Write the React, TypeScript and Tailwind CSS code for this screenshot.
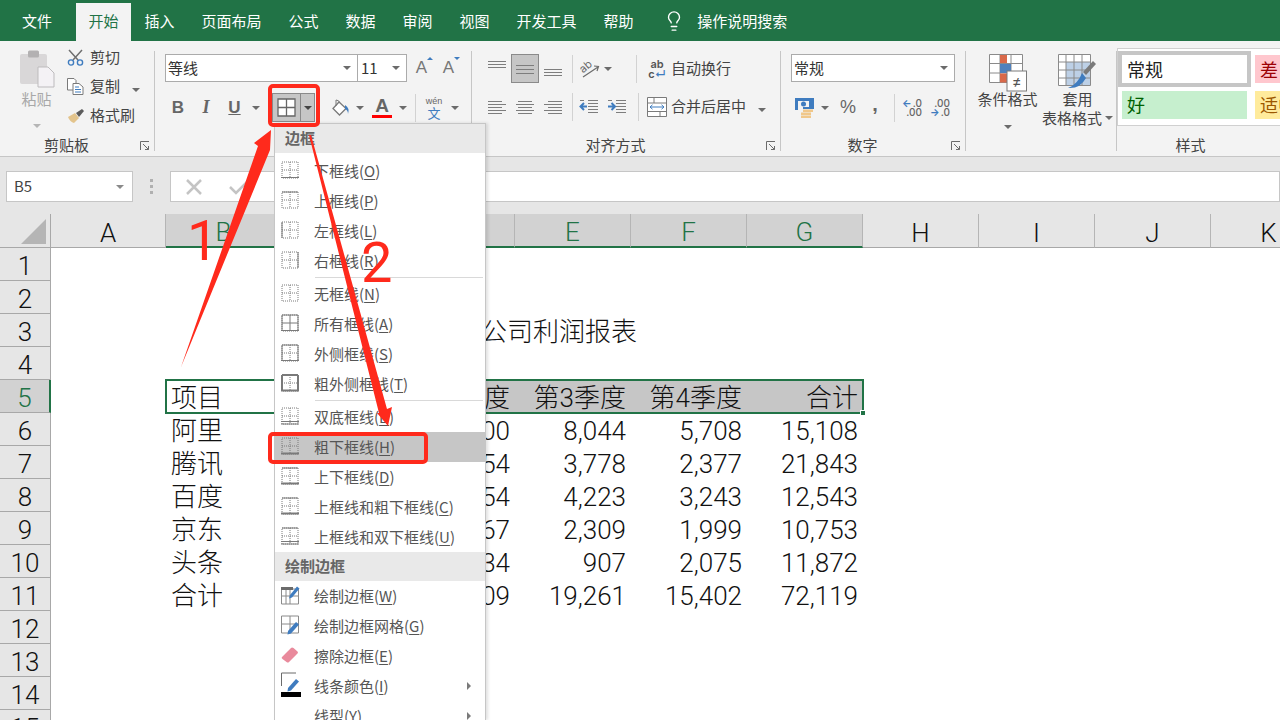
import { Lightbulb } from "lucide-react";
import type { ReactNode } from "react";

const tabs = ["开始", "插入", "页面布局", "公式", "数据", "审阅", "视图", "开发工具", "帮助"];
const columns = ["A", "B", "C", "D", "E", "F", "G", "H", "I", "J", "K"];
const rowNumbers = [1, 2, 3, 4, 5, 6, 7, 8, 9, 10, 11, 12, 13, 14, 15];
const selectedColumns = ["B", "C", "D", "E", "F", "G"];

// only what shows beside the open menu: column D is covered up to x=486
const tableRows: Record<number, string[]> = {
  5: ["项目", "度", "第3季度", "第4季度", "合计"],
  6: ["阿里", "00", "8,044", "5,708", "15,108"],
  7: ["腾讯", "54", "3,778", "2,377", "21,843"],
  8: ["百度", "54", "4,223", "3,243", "12,543"],
  9: ["京东", "67", "2,309", "1,999", "10,753"],
  10: ["头条", "34", "907", "2,075", "11,872"],
  11: ["合计", "09", "19,261", "15,402", "72,119"],
};

type Sides = { t?: number; b?: number; l?: number; r?: number; i?: boolean; dbl?: boolean };

const borderItems: { label: string; key: string; sides: Sides; sep?: boolean; active?: boolean }[] = [
  { label: "下框线", key: "O", sides: { b: 1 } },
  { label: "上框线", key: "P", sides: { t: 1 } },
  { label: "左框线", key: "L", sides: { l: 1 } },
  { label: "右框线", key: "R", sides: { r: 1 }, sep: true },
  { label: "无框线", key: "N", sides: {} },
  { label: "所有框线", key: "A", sides: { t: 1, b: 1, l: 1, r: 1, i: true } },
  { label: "外侧框线", key: "S", sides: { t: 1, b: 1, l: 1, r: 1 } },
  { label: "粗外侧框线", key: "T", sides: { t: 2, b: 2, l: 2, r: 2 }, sep: true },
  { label: "双底框线", key: "B", sides: { dbl: true } },
  { label: "粗下框线", key: "H", sides: { b: 2 }, active: true },
  { label: "上下框线", key: "D", sides: { t: 1, b: 2 } },
  { label: "上框线和粗下框线", key: "C", sides: { t: 1, b: 2 } },
  { label: "上框线和双下框线", key: "U", sides: { t: 1, dbl: true } },
];

function BorderIcon({ sides }: { sides: Sides }) {
  const dots = "1 1";
  const c = "#7a7a7a";
  return (
    <svg width="18" height="18" viewBox="0 0 18 18" className="shrink-0">
      <path d="M1 1H17V17H1Z" fill="none" stroke={c} strokeDasharray={dots} />
      <path d="M9 1V17M1 9H17" fill="none" stroke={c} strokeDasharray={sides.i ? undefined : dots} />
      {sides.t && <line x1="1" x2="17" y1="1" y2="1" stroke={c} strokeWidth={sides.t} />}
      {sides.b && <line x1="0" x2="18" y1="16.5" y2="16.5" stroke={c} strokeWidth={sides.b} />}
      {sides.l && <line x1="1" x2="1" y1="1" y2="17" stroke={c} strokeWidth={sides.l} />}
      {sides.r && <line x1="17" x2="17" y1="1" y2="17" stroke={c} strokeWidth={sides.r} />}
      {sides.dbl && <path d="M0 14.500H18M0 17H18" stroke={c} />}
    </svg>
  );
}

function Caret({ color = "#6b6b6b" }: { color?: string }) {
  return <span className="inline-block h-0 w-0 border-x-[4px] border-t-[4px] border-x-transparent" style={{ borderTopColor: color }} />;
}

function Launcher() {
  return (
    <svg width="10" height="10" viewBox="0 0 10 10" className="absolute bottom-[5px] right-[5px]">
      <path d="M.5 9V.5H9M3 3L8.500 8.500M8.500 5V8.500H5" fill="none" stroke="#6b6b6b" />
    </svg>
  );
}

function Group({ width, label, launcher, children }: { width: string; label: string; launcher?: boolean; children: ReactNode }) {
  return (
    <div className={`relative flex h-full shrink-0 flex-col ${width}`}>
      <div className="min-h-0 flex-1">{children}</div>
      <div className="flex h-[24px] items-center justify-center pr-[22px] text-[15px] leading-none text-[#444]">{label}</div>
      {launcher && <Launcher />}
      <div className="absolute bottom-[5px] right-0 top-[5px] w-px bg-[#c6c6c6]" />
    </div>
  );
}

function Slot({ w, children }: { w: string; children?: ReactNode }) {
  return <div className={`flex h-full shrink-0 items-center justify-center ${w}`}>{children}</div>;
}

function VSep() {
  return <div className="h-[28px] w-px shrink-0 bg-[#d2d2d2]" />;
}

function Lines({ y, w }: { y: number[]; w: [number, number][] }) {
  return (
    <svg width="18" height="18" viewBox="0 0 18 18">
      {y.map((yy, i) => (
        <line key={i} x1={w[i][0]} x2={w[i][1]} y1={yy + 0.5} y2={yy + 0.5} stroke="#7d7d7d" />
      ))}
    </svg>
  );
}

function IndentIcon({ right }: { right?: boolean }) {
  return (
    <svg width="20" height="18" viewBox="0 0 20 18">
      <path d="M9 2.500H19M9 5.500H19M9 8.500H19M9 11.500H19M9 14.500H19M1 2.500H5" stroke="#7d7d7d" fill="none" />
      <path d={right ? "M1 8.500H7M4.500 5L8 8.500L4.500 12" : "M8 8.500H2M5 5L1.500 8.500L5 12"} stroke="#3f7cbf" strokeWidth="2" fill="none" />
    </svg>
  );
}

function PasteIcon() {
  return (
    <svg width="36" height="38" viewBox="0 0 36 38">
      <rect x="1" y="4" width="27" height="30" rx="2" fill="#d9d7d8" />
      <rect x="9" y="0.5" width="11" height="7" rx="1.5" fill="#b3b1b2" />
      <path d="M19 17H29L35 23V37H19Z" fill="#f4f2f5" stroke="#bdbbbd" />
    </svg>
  );
}

function ScissorsIcon() {
  return (
    <svg width="17" height="17" viewBox="0 0 17 17">
      <path d="M2 1L11 11M15 1L6 11" stroke="#6f6f6f" strokeWidth="1.500" fill="none" />
      <circle cx="4" cy="13.500" r="2.600" stroke="#3f7cbf" strokeWidth="1.400" fill="none" />
      <circle cx="13" cy="13.500" r="2.600" stroke="#3f7cbf" strokeWidth="1.400" fill="none" />
    </svg>
  );
}

function CopyIcon() {
  return (
    <svg width="17" height="17" viewBox="0 0 17 17">
      <path d="M.5 .5H7L9 2.500V12H.5Z" fill="#fff" stroke="#7a7a7a" />
      <path d="M6 5.500H12L16 9V16.500H6Z" fill="#fff" stroke="#7a7a7a" />
      <path d="M8 9H12M8 11.500H14M8 14H14" stroke="#3f7cbf" />
    </svg>
  );
}

function BrushIcon() {
  return (
    <svg width="18" height="16" viewBox="0 0 18 16">
      <path d="M1 9L8 5L12 10L7 15Q3 14 1 9Z" fill="#e3c48c" />
      <path d="M9 5L15 1L17 3L12 9Z" fill="#5c5c5c" />
    </svg>
  );
}

function FillIcon() {
  return (
    <svg width="20" height="18" viewBox="0 0 20 18">
      <path d="M9 3L16 9.500L9.500 16L3 9.500Z" fill="#fff" stroke="#7a7a7a" strokeWidth="1.300" />
      <path d="M6 1L6 7M6 1Q9 1 10 4" stroke="#7a7a7a" fill="none" />
      <path d="M15 6Q20 9 18 15Q18 11 15 10Z" fill="#3f7cbf" />
    </svg>
  );
}

function OrientIcon() {
  return (
    <svg width="20" height="18" viewBox="0 0 20 18">
      <path d="M3 17L18 7M14 6L18.500 6.500L17 11" stroke="#6b6b6b" fill="none" strokeWidth="1.200" />
      <text x="0" y="11" fontSize="11" fill="#6b6b6b" fontFamily="Inter" transform="rotate(-40 5 8)">ab</text>
    </svg>
  );
}

function MergeIcon() {
  return (
    <svg width="20" height="20" viewBox="0 0 20 20">
      <path d="M.5 .5H19.500V19.500H.5ZM.5 6H19.500M.5 14.500H19.500M7 .5V6M13 14.500V19.500" fill="#fff" stroke="#7a7a7a" />
      <path d="M3 10H17M5.500 7.800L3 10L5.500 12.200M14.500 7.800L17 10L14.500 12.200" fill="none" stroke="#3f7cbf" />
    </svg>
  );
}

function CurrencyIcon() {
  return (
    <svg width="20" height="20" viewBox="0 0 20 20">
      <path d="M0 0H19V11H8V9H14V3H3V12H0Z" fill="#3f7cbf" />
      <ellipse cx="8.500" cy="6" rx="2.500" ry="2.500" fill="#3f7cbf" />
      <rect x="8" y="11.500" width="10" height="2.500" fill="#f0c78a" />
      <rect x="6" y="14.500" width="10" height="2.500" fill="#f0c78a" />
      <rect x="6" y="17.500" width="10" height="2.500" fill="#f0c78a" />
    </svg>
  );
}

function CondFormatIcon() {
  return (
    <svg width="38" height="38" viewBox="0 0 38 38">
      <path d="M.5 .5H33.500V28.500H.5ZM.5 9.500H33.500M.5 19H33.500M11 .5V28.500M22 .5V28.500" fill="#fff" stroke="#8a8a8a" />
      <rect x="11" y="1" width="7" height="8" fill="#d9694a" />
      <rect x="11" y="10" width="11" height="9" fill="#4f81bd" />
      <rect x="11" y="19.500" width="8" height="9" fill="#d9694a" />
      <rect x="18" y="17" width="19.500" height="20" fill="#fff" stroke="#7a7a7a" />
      <text x="27.700" y="33" textAnchor="middle" fontSize="15" fill="#555" fontFamily="Inter">≠</text>
    </svg>
  );
}

function TableFormatIcon() {
  return (
    <svg width="40" height="38" viewBox="0 0 40 38">
      <path d="M.5 .5H32.500V31.500H.5Z" fill="#fff" stroke="#8a8a8a" />
      <rect x="8" y="8" width="24" height="23" fill="#bdd0e6" />
      <path d="M.5 8H32.500M.5 16H32.500M.5 24H32.500M8 .5V31.500M16 .5V31.500M24 .5V31.500" stroke="#8a8a8a" fill="none" />
      <path d="M25 18L35 7L38 10L28 21Z" fill="#7a7a7a" />
      <path d="M24 19L28 24Q22 35 10 34Q20 30 24 19Z" fill="#3f7cbf" />
    </svg>
  );
}

function PencilGridIcon({ variant }: { variant: "frame" | "grid" | "color" }) {
  return (
    <svg width="20" height="20" viewBox="0 0 20 20" className="shrink-0">
      {variant === "frame" && (
        <>
          <path d="M.5 4H17.500V19H.5ZM.5 11H17.500M9 4V19M5 4V19" fill="none" stroke="#8a8a8a" />
          <rect x="0" y="2" width="12" height="3" fill="#6b6b6b" />
        </>
      )}
      {variant === "grid" && <path d="M.5 1H17.500V18H.5ZM.5 9H17.500M9 1V18" fill="none" stroke="#8a8a8a" />}
      {variant === "color" && <path d="M.5 14V1H15" fill="none" stroke="#6b6b6b" />}
      <path d={variant === "frame" ? "M9 10L16 1.500L18.500 3.500L11 12.500L8 13.500Z" : "M7 16L15 7L18 9.500L10 18.500L6.500 19.500Z"} fill="#3f7cbf" />
    </svg>
  );
}

function EraserIcon() {
  return (
    <svg width="18" height="16" viewBox="0 0 18 16" className="shrink-0">
      <path d="M1 10L10 1Q11 0 12.500 1L16.500 4.500Q17.500 5.500 16.500 6.500L8 15Q7 16 5.500 15L1.500 12Q0 11 1 10Z" fill="#e98a9c" />
    </svg>
  );
}

function Submenu() {
  return <span className="ml-auto mr-[14px] inline-block h-0 w-0 border-y-[4px] border-l-[4px] border-y-transparent border-l-[#7a7a7a]" />;
}

function MenuHeader({ children }: { children: ReactNode }) {
  return <div className="flex h-[29px] shrink-0 items-center bg-[#e9e9e9] pl-[10px] text-[15px] font-bold text-[#666]">{children}</div>;
}

function MenuItem({ icon, children, active, tail }: { icon: ReactNode; children: ReactNode; active?: boolean; tail?: ReactNode }) {
  return (
    <div className={`flex h-[30px] shrink-0 items-center text-[15px] text-[#555] ${active ? "bg-[#c6c6c6] text-[#333]" : ""}`}>
      <div className="flex w-[39px] shrink-0 justify-start pb-[3px] pl-[6px]">{icon}</div>
      <span className="whitespace-nowrap">{children}</span>
      {tail}
    </div>
  );
}

function Hot({ k }: { k: string }) {
  return (
    <>
      (<span className="underline underline-offset-2">{k}</span>)
    </>
  );
}

function BorderMenu() {
  return (
    <div className="absolute left-[274px] top-[123px] z-20 flex h-[597px] w-[212px] flex-col overflow-hidden border-x border-t border-[#c6c6c6] bg-white shadow-[2px_0_3px_rgba(0,0,0,0.12)]">
      <MenuHeader>边框</MenuHeader>
      <div className="h-[3px] shrink-0" />
      {borderItems.map((it) => (
        <div key={it.key} className="shrink-0">
          <MenuItem icon={<BorderIcon sides={it.sides} />} active={it.active}>
            {it.label}
            <Hot k={it.key} />
          </MenuItem>
          {it.sep && (
            <div className="flex h-[3px] items-center pl-[40px] pr-[2px]">
              <div className="h-px w-full bg-[#d9d9d9]" />
            </div>
          )}
        </div>
      ))}
      <MenuHeader>绘制边框</MenuHeader>
      <MenuItem icon={<PencilGridIcon variant="frame" />}>
        绘制边框
        <Hot k="W" />
      </MenuItem>
      <MenuItem icon={<PencilGridIcon variant="grid" />}>
        绘制边框网格
        <Hot k="G" />
      </MenuItem>
      <MenuItem icon={<EraserIcon />}>
        擦除边框
        <Hot k="E" />
      </MenuItem>
      <MenuItem
        icon={
          <div className="flex flex-col">
            <PencilGridIcon variant="color" />
            <div className="h-[5px] w-[20px] bg-black" />
          </div>
        }
        tail={<Submenu />}
      >
        线条颜色
        <Hot k="I" />
      </MenuItem>
      <MenuItem icon={<span />} tail={<Submenu />}>
        线型
        <Hot k="Y" />
      </MenuItem>
    </div>
  );
}

function Annotations() {
  return (
    <>
      <div className="absolute left-[268px] top-[84px] z-30 h-[43px] w-[52px] rounded-[5px] border-[4px] border-[#ff2a1c]" />
      <div className="absolute left-[268px] top-[432px] z-30 h-[32px] w-[160px] rounded-[5px] border-[4px] border-[#ff2a1c]" />
      <svg className="absolute left-0 top-0 z-30" width="1280" height="720" viewBox="0 0 1280 720">
        <polygon points="181,367 258,146 254,143 271,130 270,150" fill="#ff2a1c" />
        <polygon points="309,135 311,135 387,409 392,407 388,426 377,413 379,413" fill="#ff2a1c" />
      </svg>
      <div className="absolute left-[187px] top-[213px] z-30 font-['Roboto'] text-[56px] leading-none text-[#ff2a1c]">1</div>
      <div className="absolute left-[361px] top-[235px] z-30 font-['Roboto'] text-[56px] leading-none text-[#ff2a1c]">2</div>
    </>
  );
}

function GrowA({ up }: { up?: boolean }) {
  return (
    <span className="relative font-['Liberation_Sans'] text-[17px] text-[#777]">
      A
      <span className={`absolute -right-[6px] top-[2px] h-0 w-0 border-x-[3px] border-x-transparent ${up ? "border-b-[3px] border-b-[#3f7cbf]" : "border-t-[3px] border-t-[#3f7cbf]"}`} />
    </span>
  );
}

function DecimalIcon({ top, right }: { top: string; right?: boolean }) {
  return (
    <div className="flex flex-col items-end font-['Inter'] text-[10px] font-medium leading-[9px] text-[#666]">
      <span className="flex items-center gap-px">
        {!right && <span className="font-bold text-[#3f7cbf]">←</span>}
        {top === "0" ? ".0" : top}
      </span>
      <span className="flex items-center gap-px">
        {right && <span className="font-bold text-[#3f7cbf]">→</span>}
        {top === "0" ? ".00" : ".0"}
      </span>
    </div>
  );
}

function Ribbon() {
  return (
    <div className="flex h-[116px] shrink-0 border-b border-[#c6c6c6] bg-[#f3f3f3] pt-[5px]">
      <Group width="w-[155px]" label="剪贴板" launcher>
        <div className="flex">
          <div className="flex w-[67px] flex-col items-center pl-[6px] pt-[4px] text-[15px] leading-none text-[#a8a8a8]">
            <PasteIcon />
            <span className="mt-[3px]">粘贴</span>
            <span className="mt-[8px]"><Caret color="#b5b5b5" /></span>
          </div>
          <div className="-mt-[3px] flex flex-col text-[15px] text-[#444]">
            <div className="flex h-[29px] items-center gap-[6px]"><ScissorsIcon />剪切</div>
            <div className="flex h-[29px] items-center gap-[6px]"><CopyIcon />复制<span className="ml-[6px]"><Caret /></span></div>
            <div className="flex h-[29px] items-center gap-[5px]"><BrushIcon />格式刷</div>
          </div>
        </div>
      </Group>
      <Group width="w-[317px]" label="">
        <div className="flex flex-col pl-[10px] pt-[8px]">
          <div className="flex h-[28px] items-center">
            <div className="flex h-full w-[193px] items-center justify-between border border-[#ababab] bg-white pl-[2px] pr-[6px] text-[15px] text-[#333]">等线<Caret /></div>
            <div className="-ml-px flex h-full w-[50px] items-center justify-between border border-[#ababab] bg-white pl-[3px] pr-[6px] text-[15px] text-[#333]">11<Caret /></div>
            <Slot w="w-[27px] ml-[1px]"><GrowA up /></Slot>
            <Slot w="w-[27px]"><GrowA /></Slot>
          </div>
          <div className="mt-[11px] flex h-[29px] items-center text-[#666]">
            <Slot w="w-[26px]"><span className="font-['Liberation_Sans'] text-[17px] font-bold">B</span></Slot>
            <Slot w="w-[30px]"><span className="font-['Liberation_Serif'] text-[18px] font-bold italic">I</span></Slot>
            <Slot w="w-[27px]"><span className="font-['Liberation_Sans'] text-[17px] font-bold underline">U</span></Slot>
            <Slot w="w-[16px]"><Caret /></Slot>
            <div className="ml-[8px] flex h-[29px] w-[43px] shrink-0 border border-[#8a8a8a] bg-[#c6c6c6]">
              <div className="flex w-[28px] items-center justify-center border-r border-[#8a8a8a]">
                <svg width="19" height="19" viewBox="0 0 19 19">
                  <path d="M1 1H18V18H1ZM9.500 1V18M1 9.500H18" fill="#fff" stroke="#666" strokeWidth="1.300" />
                </svg>
              </div>
              <div className="flex flex-1 items-center justify-center"><Caret color="#444" /></div>
            </div>
            <Slot w="w-[28px] ml-[11px]"><FillIcon /></Slot>
            <Slot w="w-[12px]"><Caret /></Slot>
            <Slot w="w-[32px]">
              <div className="flex flex-col items-center">
                <span className="font-['Liberation_Sans'] text-[19px] font-bold leading-[18px] text-[#666]">A</span>
                <div className="h-[3px] w-[20px] bg-[#ff0000]" />
              </div>
            </Slot>
            <Slot w="w-[10px]"><Caret /></Slot>
            <div className="ml-[7px]"><VSep /></div>
            <Slot w="w-[36px]">
              <div className="flex flex-col items-center leading-none">
                <span className="font-['Liberation_Sans'] text-[9px] text-[#666]">wén</span>
                <span className="text-[13px] text-[#3f7cbf]">文</span>
              </div>
            </Slot>
            <Slot w="w-[6px]"><Caret /></Slot>
          </div>
        </div>
      </Group>
      <Group width="w-[309px]" label="对齐方式" launcher>
        <div className="flex flex-col pl-[11px] pt-[8px] text-[15px] text-[#444]">
          <div className="flex h-[29px] items-center">
            <Slot w="w-[28px]"><Lines y={[1, 4, 7]} w={[[0, 18], [0, 18], [0, 18]]} /></Slot>
            <div className="flex h-[29px] w-[28px] shrink-0 items-center justify-center border border-[#8a8a8a] bg-[#c6c6c6]"><Lines y={[5, 9, 13]} w={[[0, 18], [0, 18], [0, 18]]} /></div>
            <Slot w="w-[28px]"><Lines y={[9, 12, 15]} w={[[0, 18], [0, 18], [0, 18]]} /></Slot>
            <div className="ml-[5px]"><VSep /></div>
            <Slot w="w-[34px]"><OrientIcon /></Slot>
            <Slot w="w-[2px]"><Caret /></Slot>
            <div className="ml-[27px]"><VSep /></div>
            <div className="ml-[10px] flex h-full items-center gap-[4px]">
              <div className="flex w-[20px] flex-col items-center font-['Inter'] text-[11px] font-semibold leading-[10px] text-[#555]">
                <span>ab</span>
                <span>c<span className="text-[#3f7cbf]">↵</span></span>
              </div>
              自动换行
            </div>
          </div>
          <div className="mt-[9px] flex h-[29px] items-center">
            <Slot w="w-[28px]"><Lines y={[3, 6, 9, 12, 15]} w={[[0, 14], [0, 18], [0, 14], [0, 18], [0, 14]]} /></Slot>
            <Slot w="w-[28px]"><Lines y={[3, 6, 9, 12, 15]} w={[[2, 16], [0, 18], [2, 16], [0, 18], [2, 16]]} /></Slot>
            <Slot w="w-[28px]"><Lines y={[3, 6, 9, 12, 15]} w={[[4, 18], [0, 18], [4, 18], [0, 18], [4, 18]]} /></Slot>
            <div className="ml-[5px]"><VSep /></div>
            <Slot w="w-[32px]"><IndentIcon /></Slot>
            <Slot w="w-[24px]"><IndentIcon right /></Slot>
            <div className="ml-[9px]"><VSep /></div>
            <div className="ml-[8px] flex h-full items-center gap-[4px]">
              <MergeIcon />
              合并后居中
              <span className="ml-[8px]"><Caret /></span>
            </div>
          </div>
        </div>
      </Group>
      <Group width="w-[185px]" label="数字" launcher>
        <div className="flex flex-col pl-[10px] pt-[8px]">
          <div className="flex h-[28px] w-[164px] items-center justify-between border border-[#ababab] bg-white pl-[2px] pr-[6px] text-[15px] text-[#333]">常规<Caret /></div>
          <div className="mt-[11px] flex h-[29px] items-center text-[#666]">
            <div className="ml-[4px]"><CurrencyIcon /></div>
            <Slot w="w-[20px]"><Caret /></Slot>
            <Slot w="w-[26px]"><span className="font-['Liberation_Sans'] text-[18px]">%</span></Slot>
            <Slot w="w-[28px]"><span className="-mt-[8px] font-['Liberation_Sans'] text-[20px] font-bold leading-none">,</span></Slot>
            <div className="ml-[5px]"><VSep /></div>
            <Slot w="w-[34px]"><DecimalIcon top="0" /></Slot>
            <Slot w="w-[22px]"><DecimalIcon top=".00" right /></Slot>
          </div>
        </div>
      </Group>
      <Group width="w-[151px]" label="">
        <div className="flex text-[15px] leading-none text-[#444]">
          <div className="flex w-[84px] flex-col items-center pr-[1px] pt-[8px]">
            <CondFormatIcon />
            <span className="-mt-[3px] leading-[19px]">条件格式</span>
            <span className="mt-[7px]"><Caret /></span>
          </div>
          <div className="flex w-[67px] flex-col items-center pr-[12px] pt-[8px]">
            <TableFormatIcon />
            <span className="-mt-[3px] leading-[19px]">套用</span>
            <span className="flex items-center gap-[3px] whitespace-nowrap leading-[19px]">表格格式<Caret /></span>
          </div>
        </div>
      </Group>
      <div className="flex h-full min-w-0 flex-1 flex-col">
        <div className="mt-[2px] h-[78px] border-y border-l border-[#d0d0d0] bg-white pl-[4px] pt-[6px]">
          <div className="grid grid-cols-[125px_126px] gap-x-[8px] gap-y-[8px] text-[18px] leading-none">
            <div className="flex h-[28px] items-center bg-white pb-[1px] pl-[5px] text-[#222] outline-[4px] outline-[#c6c6c6]">常规</div>
            <div className="flex h-[28px] items-center bg-[#ffc7ce] pb-[1px] pl-[5px] text-[#9c0006]">差</div>
            <div className="flex h-[28px] items-center bg-[#c6efce] pb-[2px] pl-[5px] text-[#006100]">好</div>
            <div className="flex h-[28px] items-center bg-[#ffeb9c] pb-[2px] pl-[5px] text-[#9c5700]">适中</div>
          </div>
        </div>
        <div className="flex flex-1 items-center justify-center pr-[16px] pt-[7px] text-[15px] leading-none text-[#444]">样式</div>
      </div>
    </div>
  );
}

function FormulaBar() {
  return (
    <div className="flex h-[57px] shrink-0 bg-[#e6e6e6] pt-[14px]">
      <div className="ml-[6px] flex h-[31px] w-[127px] items-center justify-between border border-[#c6c6c6] bg-white pl-[7px] pr-[8px] text-[15px] text-[#444]">
        B5
        <Caret color="#8a8a8a" />
      </div>
      <div className="flex h-[31px] w-[37px] flex-col items-center justify-center gap-[3px]">
        <div className="h-[3px] w-[3px] bg-[#b0b0b0]" />
        <div className="h-[3px] w-[3px] bg-[#b0b0b0]" />
        <div className="h-[3px] w-[3px] bg-[#b0b0b0]" />
      </div>
      <div className="flex h-[31px] flex-1 items-center border border-[#c6c6c6] bg-white pl-[14px]">
        <svg width="18" height="16" viewBox="0 0 18 16">
          <path d="M2 1L16 15M16 1L2 15" stroke="#c4c4c4" strokeWidth="2.500" />
        </svg>
        <svg width="20" height="16" viewBox="0 0 20 16" className="ml-[26px]">
          <path d="M1 8L7 14L19 2" stroke="#c4c4c4" strokeWidth="2.500" fill="none" />
        </svg>
      </div>
    </div>
  );
}

const gridCols = "grid grid-cols-[51px_115px_116px_117px_116px_116px_116px_116px_116px_116px_116px_116px]";

function Sheet() {
  return (
    <div className="flex-1 overflow-hidden bg-white font-['Roboto','Noto_Sans_CJK_SC',sans-serif] text-[26px] font-light leading-none text-[#111]">
      <div className={`${gridCols} h-[34px]`}>
        <div className="relative border-b border-r border-[#a8a8a8] bg-[#e6e6e6]">
          <div className="absolute bottom-[3px] right-[4px] h-0 w-0 border-b-[25px] border-l-[25px] border-b-[#b5b5b5] border-l-transparent" />
        </div>
        {columns.map((c) => {
          const sel = selectedColumns.includes(c);
          return (
            <div
              key={c}
              className={`flex items-center justify-center border-r border-[#b5b5b5] pt-[4px] ${sel ? "border-b-[2px] border-b-[#217346] bg-[#d2d2d2] text-[#217346]" : "border-b border-b-[#a8a8a8] bg-[#e6e6e6]"}`}
            >
              {c}
            </div>
          );
        })}
      </div>
      {rowNumbers.map((n) => {
        const row = tableRows[n];
        const isSel = n === 5;
        return (
          <div key={n} className={`${gridCols} h-[33px]`}>
            <div className={`flex items-center justify-center border-b border-r border-b-[#a8a8a8] pt-[4px] ${isSel ? "border-r-[2px] border-r-[#217346] bg-[#d2d2d2] text-[#217346]" : "border-r-[#a8a8a8] bg-[#e6e6e6]"}`}>
              {n}
            </div>
            <div />
            {row ? (
              <div className={`col-span-6 grid grid-cols-[116px_117px_116px_116px_116px_116px] pt-[2px] ${isSel ? "relative bg-[#c6c6c6] outline-2 -outline-offset-1 outline-[#217346]" : ""}`}>
                <div className={`-mt-[2px] flex items-center pl-[5px] pt-[2px] ${isSel ? "bg-white" : ""}`}>{row[0]}</div>
                <div />
                {row.slice(1).map((v, i) => (
                  <div key={i} className="flex items-center justify-end whitespace-nowrap pr-[5px]">{v}</div>
                ))}
                {isSel && <div className="absolute -bottom-[3px] -right-[3px] h-[6px] w-[6px] border border-white bg-[#217346]" />}
              </div>
            ) : n === 3 ? (
              <div className="col-span-6 grid grid-cols-[116px_117px_116px_116px_116px_116px] pt-[2px]">
                <div />
                <div />
                <div className="flex items-center whitespace-nowrap pl-[82px]">公司利润报表</div>
              </div>
            ) : null}
          </div>
        );
      })}
    </div>
  );
}

export default function App() {
  return (
    <div className="relative flex h-[720px] w-[1280px] flex-col overflow-hidden font-['Noto_Sans_CJK_SC',sans-serif]">
      <div className="flex h-[41px] shrink-0 items-end bg-[#217346] text-[15px] text-white">
        <div className="flex h-[38px] w-[76px] items-center pb-[2px] pl-[22px]">文件</div>
        {tabs.map((t) =>
          t === "开始" ? (
            <div key={t} className="flex h-[38px] w-[55px] items-center justify-center bg-[#f3f3f3] pb-[2px] text-[#217346]">{t}</div>
          ) : (
            <div key={t} className="flex h-[38px] items-center px-[13.5px] pb-[2px]">{t}</div>
          )
        )}
        <div className="ml-[16px] flex h-[38px] items-center gap-[12px] pb-[2px]">
          <Lightbulb size={22} strokeWidth={1.5} />
          操作说明搜索
        </div>
      </div>
      <Ribbon />
      <FormulaBar />
      <Sheet />
      <BorderMenu />
      <Annotations />
    </div>
  );
}
